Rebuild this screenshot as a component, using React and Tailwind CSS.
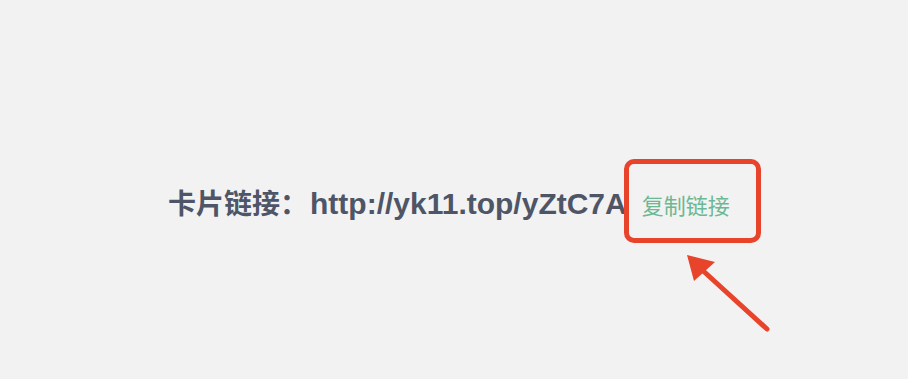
import React from 'react';

const App = () => {
  return (
    <div className="w-[908px] h-[379px] bg-[#f2f2f2] relative overflow-hidden font-['Liberation_Sans','Noto_Sans_CJK_SC',sans-serif]">
      <div className="flex items-center pt-[186px] pl-[168px]">
        <span className="leading-[36px] font-bold text-[#4e5567]">
          <span className="text-[28px]">卡片链接：</span>
          <span className="text-[30px] ml-[2px]">http://yk11.top/yZtC7A</span>
        </span>
        <div className="relative ml-[15px]">
          <button className="text-[22px] leading-[36px] text-[#6cb893]">复制链接</button>
          <div className="absolute left-[-18px] top-[-30px] w-[137px] h-[84px] rounded-[10px] border-[5px] border-[#e8432b]"></div>
        </div>
      </div>
      <svg className="absolute left-0 top-0" width="908" height="379">
        <line x1="767" y1="329" x2="700" y2="268" stroke="#e8432b" strokeWidth="5" strokeLinecap="round" />
        <polygon points="687,255 715,262 694,281" fill="#e8432b" />
      </svg>
    </div>
  );
};

export default App;
